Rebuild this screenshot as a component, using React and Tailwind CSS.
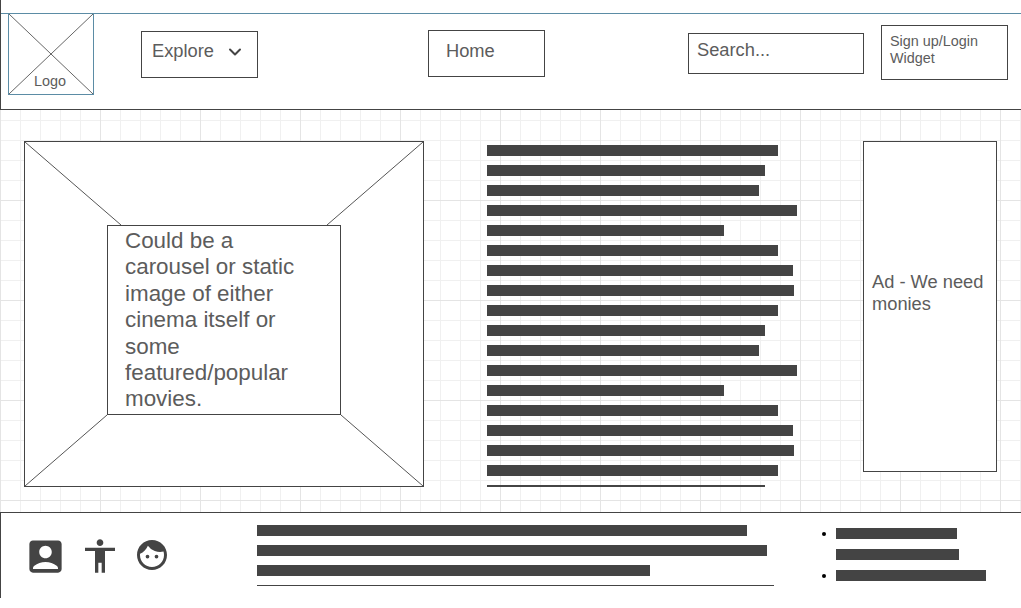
import { MdAccountBox, MdAccessibility, MdFace } from 'react-icons/md'
import { ChevronDown } from 'lucide-react'

const articleBars = [291, 278, 272, 310, 237, 291, 306, 307, 291, 278, 272, 310, 237, 291, 306, 307, 291, 278]
const footerBars = [490, 510, 393]

function Bar({ width }) {
  return <div className="h-[11px] shrink-0 bg-[#444444]" style={{ width }} />
}

function Bullet({ visible }) {
  return <span className={visible ? 'h-1 w-1 rounded-full bg-black' : 'h-1 w-1'} />
}

export default function App() {
  return (
    <div className="h-[608px] w-[1021px] overflow-hidden bg-white bg-[linear-gradient(to_right,#e4e4e4_1px,transparent_1px),linear-gradient(to_bottom,#e4e4e4_1px,transparent_1px),linear-gradient(to_right,#f0f0f0_1px,transparent_1px),linear-gradient(to_bottom,#f0f0f0_1px,transparent_1px)] bg-[size:100px_100px,100px_100px,20px_20px,20px_20px] font-['Liberation_Sans',Arial,sans-serif] text-[#5c5c5c]">
      <header className="h-[110px] border-b border-l border-[#444444] bg-white pt-[13px]">
        <div className="flex items-start border-t border-[#5b8ca5]">
          <div className="relative -mt-px ml-[7px] h-[82px] w-[86px] shrink-0 border border-[#5b8ca5]">
            <svg className="absolute inset-0 h-full w-full" viewBox="0 0 84 80" preserveAspectRatio="none">
              <path d="M0 0L84 80M84 0L0 80" stroke="#666666" strokeWidth="1" fill="none" />
            </svg>
            <span className="absolute left-[25px] top-[59px] text-[14.4px] leading-4">Logo</span>
          </div>
          <div className="ml-[47px] mt-[17px] flex h-[47px] w-[117px] shrink-0 items-center border border-[#444444] pl-[10px] text-[18.3px]">
            <span className="-mt-[8px]">Explore</span>
            <ChevronDown size={20} strokeWidth={2.4} className="-mt-[5px] ml-[11px] text-[#444444]" />
          </div>
          <div className="ml-[170px] mt-[16px] flex h-[47px] w-[117px] shrink-0 items-center border border-[#444444] pl-[17px] text-[18.3px]">
            <span className="-mt-[6px]">Home</span>
          </div>
          <div className="ml-[143px] mt-[19px] flex h-[41px] w-[176px] shrink-0 items-center border border-[#444444] pl-[8px] text-[18.3px]">
            <span className="-mt-[8px]">Search...</span>
          </div>
          <div className="ml-[17px] mt-[11px] h-[55px] w-[127px] shrink-0 border border-[#444444] pl-[8px] pt-[7px] text-[14.4px] leading-[17px]">
            Sign up/Login
            <br />
            Widget
          </div>
        </div>
      </header>

      <main className="flex h-[402px] items-start pt-[31px]">
        <section className="relative ml-[24px] h-[346px] w-[400px] shrink-0 border border-[#444444] bg-white pl-[82px] pt-[83px]">
          <svg className="absolute inset-0 h-full w-full" viewBox="0 0 398 344" preserveAspectRatio="none">
            <path d="M0 0L96 83M398 0L302 83M0 344L82 273M398 344L316 273" stroke="#555555" strokeWidth="1" fill="none" />
          </svg>
          <div className="relative flex h-[190px] w-[234px] items-center border border-[#444444] bg-white pl-[17px] pr-[30px] pt-[0.8px] text-[22.4px] leading-[26.4px]">
            <p>Could be a carousel or static image of either cinema itself or some featured/popular movies.</p>
          </div>
        </section>

        <section className="ml-[63px] mt-[4px] flex h-[342px] w-[310px] shrink-0 flex-col gap-[9px] overflow-hidden">
          {articleBars.map((width, i) => (
            <Bar key={i} width={width} />
          ))}
        </section>

        <aside className="ml-[66px] h-[331px] w-[134px] shrink-0 border border-[#444444] bg-white pl-[8px] pr-[6px] pt-[129px] text-[18.3px] leading-[22px]">
          Ad - We need monies
        </aside>
      </main>

      <footer className="flex h-[86px] border-l border-t border-[#444444] bg-white text-[#444444]">
        <div className="ml-[23px] flex w-[233px] shrink-0 items-start pt-[23px]">
          <MdAccountBox size={43} className="-mt-[1px] shrink-0" />
          <MdAccessibility size={40} className="ml-[13px] shrink-0" />
          <MdFace size={36} className="ml-[14px] mt-[1px] shrink-0" />
        </div>
        <div className="flex w-[517px] shrink-0 flex-col gap-[9px] pt-[12px]">
          {footerBars.map((width, i) => (
            <Bar key={i} width={width} />
          ))}
          <div className="h-px w-[517px] bg-[#444444]" />
        </div>
        <ul className="ml-[48px] flex flex-col gap-[10px] pt-[15px]">
          <li className="flex items-center gap-[10px]">
            <Bullet visible />
            <Bar width={121} />
          </li>
          <li className="flex items-center gap-[10px]">
            <Bullet />
            <Bar width={123} />
          </li>
          <li className="flex items-center gap-[10px]">
            <Bullet visible />
            <Bar width={150} />
          </li>
        </ul>
      </footer>
      <div className="h-[10px] bg-white" />
    </div>
  )
}
